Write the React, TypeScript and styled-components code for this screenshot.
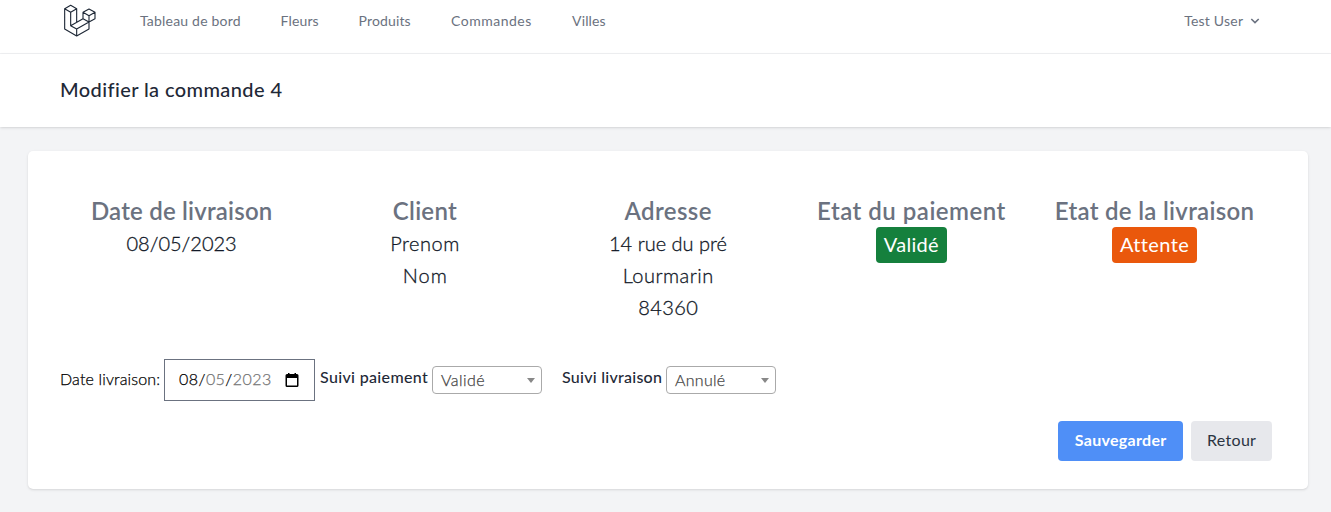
import React from "react";
import styled, { createGlobalStyle } from "styled-components";

const GlobalStyle = createGlobalStyle`
  *, *::before, *::after { box-sizing: border-box; }
  body {
    margin: 0;
    background: #f3f4f6;
    color: #111827;
    font-family: Lato, "Liberation Sans", sans-serif;
    overflow: hidden;
  }
`;

const Text = styled.span<{ $track?: number }>`
  letter-spacing: ${(p) => p.$track ?? 0}px;
  margin-right: ${(p) => -(p.$track ?? 0)}px;
  white-space: nowrap;
`;

const Page = styled.div`
  height: 512px;
  background: #f3f4f6;
`;

const Nav = styled.nav`
  display: flex;
  align-items: flex-start;
  height: 54px;
  padding: 3px 71px 0 60px;
  background: #fff;
  border-bottom: 1px solid #f0f1f3;
`;

const Logo = styled.svg`
  display: block;
  width: 36px;
  height: 36px;
  flex: none;
`;

const Links = styled.div`
  display: flex;
  gap: 40px;
  margin: 8px auto 0 44px;
`;

const NavLink = styled.a<{ $w: number }>`
  width: ${(p) => p.$w}px;
  font-size: 14px;
  line-height: 20px;
  font-weight: 400;
  color: #6b7280;
  white-space: nowrap;
`;

const UserMenu = styled.button`
  display: flex;
  align-items: center;
  gap: 7px;
  margin-top: 8px;
  padding: 0;
  border: 0;
  background: none;
  color: #6b7280;
  font: 400 14px/20px Lato, sans-serif;
`;

const Chevron = styled.svg`
  width: 10px;
  height: 6px;
`;

const Header = styled.header`
  height: 73px;
  padding: 21px 60px;
  background: #fff;
  box-shadow: 0 1px 3px rgba(0, 0, 0, 0.1), 0 1px 2px -1px rgba(0, 0, 0, 0.1);
`;

const Title = styled.h1`
  margin: 0;
  font-size: 20px;
  line-height: 28px;
  font-weight: 500;
  color: #1f2937;
`;

const Card = styled.main`
  width: 1280px;
  height: 338px;
  margin: 24px 0 0 28px;
  padding: 44px 32px 28px;
  background: #fff;
  border-radius: 5px;
  box-shadow: 0 1px 3px rgba(0, 0, 0, 0.1), 0 1px 2px -1px rgba(0, 0, 0, 0.1);
`;

const Summary = styled.section`
  display: grid;
  grid-template-columns: repeat(5, 1fr);
  height: 164px;
  text-align: center;
`;

const Column = styled.div`
  display: flex;
  flex-direction: column;
  align-items: center;
`;

const ColumnTitle = styled.h2`
  margin: 0;
  font-size: 24px;
  line-height: 32px;
  font-weight: 600;
  color: #6b7280;
`;

const Value = styled.div`
  font-size: 20px;
  line-height: 32px;
  font-weight: 300;
  -webkit-text-stroke: 0.3px currentColor;
`;

const Badge = styled.div<{ $bg: string; $w: number }>`
  width: ${(p) => p.$w}px;
  height: 36px;
  border-radius: 4px;
  background: ${(p) => p.$bg};
  color: #fff;
  font-size: 20px;
  line-height: 35px;
  font-weight: 400;
`;

const FormRow = styled.form`
  display: flex;
  align-items: center;
  height: 42px;
  font-size: 16px;
  line-height: 24px;
  font-weight: 300;
`;

const DateLabel = styled.label`
  width: 104px;
  padding-bottom: 2px;
  color: #000;
  -webkit-text-stroke: 0.25px currentColor;
`;

const DateField = styled.div`
  display: flex;
  align-items: center;
  justify-content: space-between;
  width: 151px;
  height: 42px;
  padding: 0 15px 0 14px;
  border: 1px solid #6b7280;
  color: #000;
`;

const DateText = styled.span`
  padding-bottom: 2px;
  -webkit-text-stroke: 0.25px;
`;

const Muted = styled.span`
  color: #757575;
`;

const CalendarIcon = styled.svg`
  width: 14px;
  height: 15px;
`;

const SelectLabel = styled.label<{ $w: number; $gap: number }>`
  width: ${(p) => p.$w}px;
  margin: -6px 4px 0 ${(p) => p.$gap}px;
  font-weight: 500;
  color: #1f2937;
`;

const Select = styled.div`
  display: flex;
  align-items: center;
  justify-content: space-between;
  width: 110px;
  height: 28px;
  padding: 0 6px 0 8px;
  border: 1px solid #aaa;
  border-radius: 4px;
  color: #444;
  -webkit-text-stroke: 0.25px currentColor;
`;

const Caret = styled.span`
  border: 4px solid transparent;
  border-top: 5px solid #888;
  border-bottom: 0;
`;

const Actions = styled.div`
  display: flex;
  justify-content: flex-end;
  gap: 8px;
  margin: 20px 4px 0 0;
`;

const Button = styled.button<{ $primary?: boolean }>`
  width: ${(p) => (p.$primary ? 125 : 81)}px;
  height: 40px;
  padding: 0 0 2px;
  border: 0;
  border-radius: 4px;
  background: ${(p) => (p.$primary ? "#4f8ff7" : "#e7e8ec")};
  color: ${(p) => (p.$primary ? "#fff" : "#2b3442")};
  font: ${(p) => (p.$primary ? 700 : 400)} 16px/24px Lato, sans-serif;
`;

const links = [
  { label: "Tableau de bord", w: 100.5, track: 0.2 },
  { label: "Fleurs", w: 38, track: 0.15 },
  { label: "Produits", w: 52.5, track: 0.15 },
  { label: "Commandes", w: 81, track: 0.5 },
  { label: "Villes", w: 34, track: 0.15 },
];

export default function App() {
  return (
    <Page>
      <GlobalStyle />
      <Nav>
        <Logo viewBox="29 9 108 108" fill="none" stroke="#1f2937" strokeWidth="3.4" strokeLinejoin="round">
          <path d="M61 16L79 26L61 37L43 26ZM43 26V87L79 108L116 87V66M61 37V77L79 87V108M79 26V67M61 77L98 56M79 87L116 66M116 27L134 37L116 47L98 37ZM98 37V56L116 66L134 56V37M116 47V66" />
        </Logo>
        <Links>
          {links.map((l) => (
            <NavLink key={l.label} $w={l.w}>
              <Text $track={l.track}>{l.label}</Text>
            </NavLink>
          ))}
        </Links>
        <UserMenu>
          <Text $track={0.2}>Test User</Text>
          <Chevron viewBox="0 0 10 6" fill="none" stroke="#6b7280" strokeWidth="1.6">
            <path d="M1.3 1L5 4.6L8.7 1" />
          </Chevron>
        </UserMenu>
      </Nav>
      <Header>
        <Title><Text $track={0.4}>Modifier la commande 4</Text></Title>
      </Header>
      <Card>
        <Summary>
          <Column>
            <ColumnTitle><Text $track={0.2}>Date de livraison</Text></ColumnTitle>
            <Value><Text>08/05/2023</Text></Value>
          </Column>
          <Column>
            <ColumnTitle><Text $track={0.3}>Client</Text></ColumnTitle>
            <Value><Text $track={0.5}>Prenom</Text></Value>
            <Value><Text $track={1}>Nom</Text></Value>
          </Column>
          <Column>
            <ColumnTitle><Text $track={0.4}>Adresse</Text></ColumnTitle>
            <Value><Text>14 rue du pré</Text></Value>
            <Value><Text $track={0.5}>Lourmarin</Text></Value>
            <Value><Text $track={0.4}>84360</Text></Value>
          </Column>
          <Column>
            <ColumnTitle><Text $track={0.5}>Etat du paiement</Text></ColumnTitle>
            <Badge $bg="#15803d" $w={71}><Text $track={0.3}>Validé</Text></Badge>
          </Column>
          <Column>
            <ColumnTitle><Text $track={0.3}>Etat de la livraison</Text></ColumnTitle>
            <Badge $bg="#ea580c" $w={85}><Text $track={0.4}>Attente</Text></Badge>
          </Column>
        </Summary>
        <FormRow>
          <DateLabel><Text $track={0.15}>Date livraison:</Text></DateLabel>
          <DateField>
            <DateText><Text $track={0.45}>08/<Muted>05</Muted>/<Muted>2023</Muted></Text></DateText>
            <CalendarIcon viewBox="0 0 14 15">
              <path fill="#000" fillRule="evenodd" d="M2 1H3V0H4.5V1H9.5V0H11V1H12Q13.5 1 13.5 2.5V12.5Q13.5 14 12 14H2Q.5 14 .5 12.5V2.5Q.5 1 2 1ZM2 5V12.5H12V5Z" />
            </CalendarIcon>
          </DateField>
          <SelectLabel $w={108} $gap={5}><Text $track={0.34}>Suivi paiement</Text></SelectLabel>
          <Select><Text $track={0.45}>Validé</Text><Caret /></Select>
          <SelectLabel $w={100} $gap={20}><Text $track={0.26}>Suivi livraison</Text></SelectLabel>
          <Select><Text $track={0.3}>Annulé</Text><Caret /></Select>
        </FormRow>
        <Actions>
          <Button $primary><Text $track={0.3}>Sauvegarder</Text></Button>
          <Button><Text $track={0.3}>Retour</Text></Button>
        </Actions>
      </Card>
    </Page>
  );
}
